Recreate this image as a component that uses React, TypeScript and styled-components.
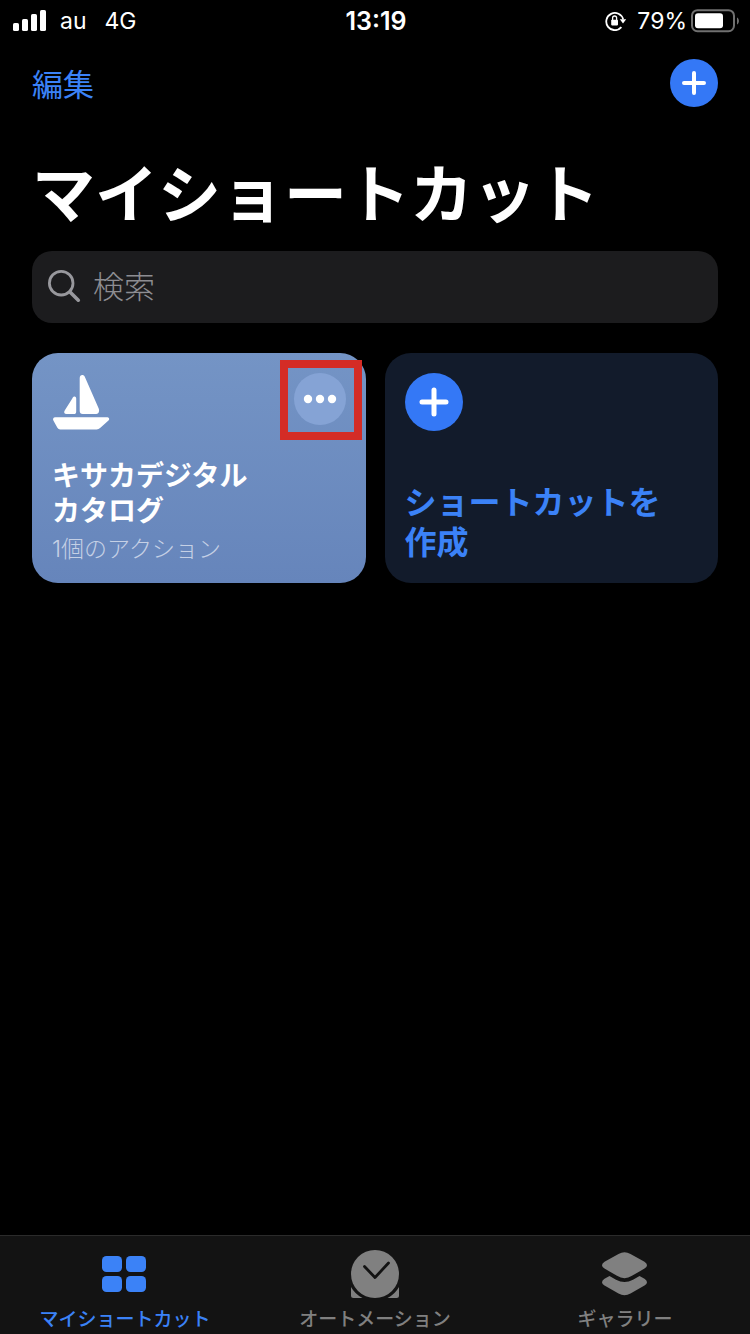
import React from 'react';
import styled, { createGlobalStyle } from 'styled-components';

const BLUE = '#3478f6';
const LINK = '#3b82f7';
const GRAY = '#808080';

const GlobalStyle = createGlobalStyle`
  * { box-sizing: border-box; }
  body {
    margin: 0;
    background: #000;
    color: #fff;
    font-family: Inter, "Noto Sans CJK JP", sans-serif;
  }
  button, input { font-family: inherit; }
  button { border: 0; padding: 0; margin: 0; background: none; color: inherit; cursor: pointer; }
  svg { display: block; flex: none; }
`;

const Screen = styled.div`
  display: flex;
  flex-direction: column;
  min-height: 100vh;
`;

const StatusBar = styled.header`
  display: grid;
  grid-template-columns: 1fr auto 1fr;
  align-items: center;
  height: 40px;
  padding: 0 11px 0 13px;
  font-size: 23px;
  line-height: 42px;
`;

const StatusGroup = styled.div<{ $end?: boolean; $gap: number }>`
  display: flex;
  align-items: center;
  justify-content: ${(p) => (p.$end ? 'flex-end' : 'flex-start')};
  gap: ${(p) => p.$gap}px;
`;

const Clock = styled.time`
  font-size: 25px;
  font-weight: 600;
`;

const Carrier = styled.span`
  padding-left: 14px;
`;

const Network = styled.span`
  padding-left: 18px;
`;

const Main = styled.main`
  flex: 1;
  padding: 0 32px;
`;

const NavBar = styled.div`
  display: flex;
  align-items: center;
  justify-content: space-between;
  height: 86px;
`;

const EditButton = styled.button`
  padding-top: 4px;
  color: ${LINK};
  font-size: 31px;
  line-height: 40px;
  font-weight: 400;
`;

const RoundButton = styled.button`
  display: flex;
  border-radius: 50%;
`;

const Title = styled.h1`
  margin: 20px 0 0;
  font-size: 63px;
  line-height: 96px;
  font-weight: 700;
`;

const SearchField = styled.label`
  display: flex;
  align-items: center;
  gap: 12px;
  height: 72px;
  margin-top: 9px;
  padding: 0 16px 2px;
  border-radius: 20px;
  background: #1c1c1e;
`;

const SearchInput = styled.input`
  flex: 1;
  min-width: 0;
  height: 48px;
  padding: 0;
  border: 0;
  outline: 0;
  background: none;
  color: #fff;
  font-size: 31px;
  font-weight: 300;
  &::placeholder { color: #8d8d92; opacity: 1; }
`;

const CardGrid = styled.section`
  display: grid;
  grid-template-columns: 1fr 1fr;
  gap: 19px;
  margin-top: 30px;
`;

const ShortcutCard = styled.article`
  position: relative;
  display: flex;
  flex-direction: column;
  justify-content: space-between;
  height: 230px;
  padding: 20px 20px 18px;
  border-radius: 26px;
  background: linear-gradient(#7494c5, #6685bb);
`;

const CreateCard = styled.button`
  display: flex;
  flex-direction: column;
  justify-content: space-between;
  height: 230px;
  padding: 20px;
  border-radius: 26px;
  background: #121b2b;
  color: ${LINK};
  text-align: left;
  font-size: 32px;
  line-height: 40px;
  font-weight: 700;
`;

const CardTop = styled.div`
  display: flex;
  justify-content: space-between;
`;

const CardName = styled.h2`
  margin: 0;
  font-size: 28px;
  line-height: 35px;
  font-weight: 700;
`;

const CardMeta = styled.p`
  margin: 4px 0 0;
  font-size: 23px;
  line-height: 32px;
  font-weight: 300;
  color: #c5d0e5;
`;

const Highlight = styled.div`
  position: absolute;
  top: 7px;
  right: 4px;
  width: 82px;
  height: 80px;
  border: 8px solid #d42c26;
  pointer-events: none;
`;

const TabBar = styled.nav`
  display: grid;
  grid-template-columns: repeat(3, 1fr);
  height: 99px;
  border-top: 1px solid #2b2b2b;
  background: #131313;
`;

const Tab = styled.a<{ $active?: boolean }>`
  display: flex;
  flex-direction: column;
  align-items: center;
  padding-top: 14px;
  color: ${(p) => (p.$active ? LINK : GRAY)};
  font-size: 19px;
  line-height: 28px;
  font-weight: 500;
  text-decoration: none;
  white-space: nowrap;
`;

const TabLabel = styled.span`
  margin-top: 8px;
`;

const SignalIcon = () => (
  <svg width="33" height="22" viewBox="0 0 33 22" fill="#fff" aria-hidden="true">
    <rect x="0" y="13" width="6" height="8" rx="1.6" />
    <rect x="9" y="9" width="6" height="12" rx="1.6" />
    <rect x="18" y="4" width="6" height="17" rx="1.6" />
    <rect x="27" y="0" width="6" height="21" rx="1.6" />
  </svg>
);

const RotationLockIcon = () => (
  <svg width="22" height="20" viewBox="0 0 22 20" fill="none" aria-hidden="true">
    <path d="M16.400 16.200A8.600 8.600 0 1 1 18.200 8.400" stroke="#fff" strokeWidth="1.800" />
    <path d="M14.800 8.200H21.200L18 12.400Z" fill="#fff" />
    <rect x="6.200" y="8.800" width="6.800" height="5.600" rx="0.800" fill="#fff" />
    <path d="M7.600 9V7a2 2 0 0 1 4 0v2" stroke="#fff" strokeWidth="1.300" />
  </svg>
);

const BatteryIcon = () => (
  <svg width="48" height="24" viewBox="0 0 48 24" fill="none" aria-hidden="true">
    <rect x="1" y="1.200" width="42" height="21" rx="5.500" stroke="#707070" strokeWidth="2" />
    <rect x="4" y="4.200" width="28" height="15" rx="3" fill="#fff" />
    <path d="M46 8.500c2.600 1.300 2.600 5.700 0 7z" fill="#707070" />
  </svg>
);

const PlusIcon = ({ size, arm, thickness }: { size: number; arm: number; thickness: number }) => {
  const c = size / 2;
  return (
    <svg width={size} height={size} viewBox={`0 0 ${size} ${size}`} aria-hidden="true">
      <circle cx={c} cy={c} r={c} fill={BLUE} />
      <path
        d={`M${c - arm} ${c}H${c + arm}M${c} ${c - arm}V${c + arm}`}
        stroke="#fff"
        strokeWidth={thickness}
        strokeLinecap="round"
      />
    </svg>
  );
};

const SearchIcon = () => (
  <svg width="33" height="34" viewBox="0 0 33 34" fill="none" stroke="#98989d" strokeLinecap="round" aria-hidden="true">
    <circle cx="13.200" cy="14.200" r="11.800" strokeWidth="2.800" />
    <path d="M22 23L30.300 31.200" strokeWidth="3.600" />
  </svg>
);

const SailboatIcon = () => (
  <svg width="58" height="58" viewBox="0 0 58 58" fill="#fff" aria-hidden="true">
    <path d="M27.700 5.200C27.700 1.400 31.700 1.200 32.900 4L46.700 35.600C47.700 38.200 46.700 41 44.300 41H30.700Q27.700 41 27.700 38Z" />
    <path d="M20.300 25.400C21.500 22.500 24.200 23 24.200 25.600V38.400Q24.200 41 21.800 41H14.600C12.200 41 11.600 39.200 12.700 37.400Z" />
    <path d="M3.400 44.200H54.500C57.400 44.200 58 46.400 56.200 47.800L48.400 54.700Q46.600 56.400 44.600 56.400H8.200Q6.400 56.400 5.400 54.800L1.500 47.800C.5 46 1.100 44.200 3.400 44.200Z" />
  </svg>
);

const MoreButton = styled(RoundButton)`
  align-self: flex-start;
`;

const MoreIcon = () => (
  <svg width="52" height="52" viewBox="0 0 52 52" aria-hidden="true">
    <circle cx="26" cy="26" r="26" fill="#85a3d5" />
    <g fill="#fff">
      <circle cx="14" cy="26" r="4.200" />
      <circle cx="26" cy="26" r="4.200" />
      <circle cx="38" cy="26" r="4.200" />
    </g>
  </svg>
);

const GridIcon = () => (
  <svg width="48" height="48" viewBox="0 0 48 48" fill="currentColor" aria-hidden="true">
    <rect x="1" y="6" width="20" height="16" rx="4.500" />
    <rect x="25" y="6" width="20" height="16" rx="4.500" />
    <rect x="1" y="26" width="20" height="16" rx="4.500" />
    <rect x="25" y="26" width="20" height="16" rx="4.500" />
  </svg>
);

const AutomationIcon = () => (
  <svg width="48" height="48" viewBox="0 0 48 48" fill="currentColor" aria-hidden="true">
    <circle cx="24" cy="24" r="24" />
    <path d="M0 37A27 27 0 0 0 11.500 48H2.500Q0 48 0 45.500Z" />
    <path d="M48 37A27 27 0 0 1 36.500 48H45.500Q48 48 48 45.500Z" />
    <path d="M13.500 16.500L24 27.500L37.500 13" fill="none" stroke="#131313" strokeWidth="2.800" strokeLinecap="round" strokeLinejoin="round" />
  </svg>
);

const GalleryIcon = () => (
  <svg width="48" height="48" viewBox="0 0 48 48" fill="currentColor" aria-hidden="true">
    <path d="M17.500 4Q23.500 .4 29.500 4L43.500 11.800Q48.500 15.200 43.500 18.600L31 25.800Q23.500 30.600 16 25.800L3.500 18.600Q-1.500 15.200 3.500 11.800Z" />
    <path d="M8.500 26L15 29.800Q23.500 34.200 32 29.800L38.500 26L43.500 28.800Q48.500 32.200 43.500 35.600L29.500 43.600Q23.500 47 17.500 43.600L3.500 35.600Q-1.500 32.200 3.500 28.800Z" />
  </svg>
);

export default function App() {
  return (
    <>
      <GlobalStyle />
      <Screen lang="ja">
        <StatusBar>
          <StatusGroup $gap={0}>
            <SignalIcon />
            <Carrier>au</Carrier>
            <Network>4G</Network>
          </StatusGroup>
          <Clock>13:19</Clock>
          <StatusGroup $end $gap={4}>
            <StatusGroup $gap={10}>
              <RotationLockIcon />
              <span>79%</span>
            </StatusGroup>
            <BatteryIcon />
          </StatusGroup>
        </StatusBar>

        <Main>
          <NavBar>
            <EditButton type="button">編集</EditButton>
            <RoundButton type="button" aria-label="追加">
              <PlusIcon size={48} arm={10} thickness={4} />
            </RoundButton>
          </NavBar>
          <Title>マイショートカット</Title>
          <SearchField>
            <SearchIcon />
            <SearchInput type="search" placeholder="検索" aria-label="検索" />
          </SearchField>

          <CardGrid>
            <ShortcutCard>
              <CardTop>
                <SailboatIcon />
                <MoreButton type="button" aria-label="詳細">
                  <MoreIcon />
                </MoreButton>
              </CardTop>
              <div>
                <CardName>
                  キサカデジタル
                  <br />
                  カタログ
                </CardName>
                <CardMeta>1個のアクション</CardMeta>
              </div>
              <Highlight />
            </ShortcutCard>
            <CreateCard type="button">
              <PlusIcon size={58} arm={12} thickness={5} />
              <span>
                ショートカットを
                <br />
                作成
              </span>
            </CreateCard>
          </CardGrid>
        </Main>

        <TabBar>
          <Tab href="#shortcuts" $active aria-current="page">
            <GridIcon />
            <TabLabel>マイショートカット</TabLabel>
          </Tab>
          <Tab href="#automation">
            <AutomationIcon />
            <TabLabel>オートメーション</TabLabel>
          </Tab>
          <Tab href="#gallery">
            <GalleryIcon />
            <TabLabel>ギャラリー</TabLabel>
          </Tab>
        </TabBar>
      </Screen>
    </>
  );
}
